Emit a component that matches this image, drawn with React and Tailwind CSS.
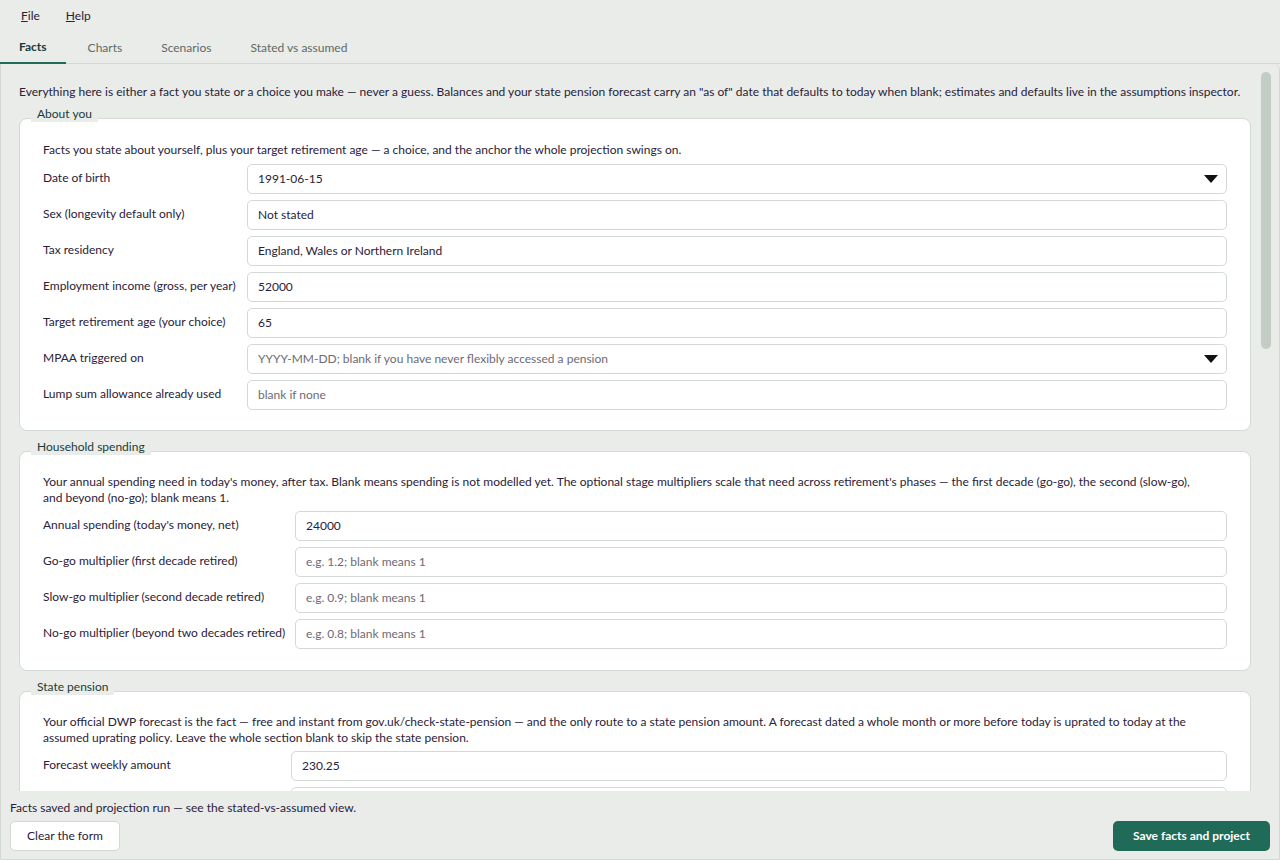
import React from "react";

const font = { fontFamily: 'Lato, "Noto Sans", Arial, sans-serif' };

const Caret = () => (
  <svg width="14" height="8" viewBox="0 0 14 8" className="shrink-0">
    <path d="M0 0h14L7 8z" fill="#111" />
  </svg>
);

const Field = ({ value, placeholder, combo }) => (
  <div className="h-[30px] flex items-center rounded-[5px] border border-[#d3d9d4] bg-white pl-[10px] pr-[8px]">
    <span className={value ? "flex-1 text-[#2a2139]" : "flex-1 text-[#6e6a74]"}>
      {value || placeholder}
    </span>
    {combo && <Caret />}
  </div>
);

const Section = ({ title, desc, rows, labelWidth, descClass, boxClass }) => (
  <div className="flex flex-col">
    <div className="relative z-10 ml-[12px] -mb-[4px] w-fit bg-[#e9ece9] px-[6px] leading-[16px] text-[#1d3b36]">
      {title}
    </div>
    <div className={"rounded-[8px] border border-[#d3d9d4] bg-white px-[23px] " + boxClass}>
      <p className={descClass}>{desc}</p>
      <div className="flex flex-col gap-[6px]">
        {rows.map((r, i) => (
          <div key={i} className="flex items-center">
            <div className="shrink-0 whitespace-nowrap" style={{ width: labelWidth }}>
              <span className="relative -top-[1px]">{r.label}</span>
            </div>
            <div className="flex-1">
              <Field value={r.value} placeholder={r.placeholder} combo={r.combo} />
            </div>
          </div>
        ))}
      </div>
    </div>
  </div>
);

const aboutRows = [
  { label: "Date of birth", value: "1991-06-15", combo: true },
  { label: "Sex (longevity default only)", value: "Not stated" },
  { label: "Tax residency", value: "England, Wales or Northern Ireland" },
  { label: "Employment income (gross, per year)", value: "52000" },
  { label: "Target retirement age (your choice)", value: "65" },
  {
    label: "MPAA triggered on",
    placeholder: "YYYY-MM-DD; blank if you have never flexibly accessed a pension",
    combo: true,
  },
  { label: "Lump sum allowance already used", placeholder: "blank if none" },
];

const spendRows = [
  { label: "Annual spending (today's money, net)", value: "24000" },
  { label: "Go-go multiplier (first decade retired)", placeholder: "e.g. 1.2; blank means 1" },
  { label: "Slow-go multiplier (second decade retired)", placeholder: "e.g. 0.9; blank means 1" },
  { label: "No-go multiplier (beyond two decades retired)", placeholder: "e.g. 0.8; blank means 1" },
];

const pensionRows = [
  { label: "Forecast weekly amount", value: "230.25" },
  { label: "", placeholder: "" },
];

export default function App() {
  return (
    <div style={font} className="h-[860px] w-[1280px] overflow-hidden bg-[#e9ece9] text-[12px] text-[#2a2139] flex flex-col">
      {/* menu */}
      <div className="flex h-[32px] items-center gap-[26px] pl-[21px]">
        <span><span className="underline">F</span>ile</span>
        <span><span className="underline">H</span>elp</span>
      </div>

      {/* tabs */}
      <div className="flex h-[32px] border-b border-[#d3d9d4] text-[#5f6a66]">
        <div className="flex items-center border-b-2 border-[#1f6b58] px-[19px] font-bold text-[#1d3b36] -mb-[1px]">
          Facts
        </div>
        <div className="flex items-center pl-[22px] pr-[20px]">Charts</div>
        <div className="flex items-center pl-[19px] pr-[20px]">Scenarios</div>
        <div className="flex items-center px-[19px]">Stated vs assumed</div>
      </div>

      {/* tab pane */}
      <div className="flex-1 flex flex-col min-h-0 rounded-b-[2px] rounded-tr-[6px] border border-t-0 border-[#d3d9d4]">
        <div className="relative h-[727px] shrink-0 overflow-hidden">
          <div className="pl-[18px] pr-[28px] pt-[19px]">
            <p className="leading-[17px] mb-[6px] whitespace-nowrap">
              Everything here is either a fact you state or a choice you make — never a guess. Balances and your state pension forecast carry an "as of" date that defaults to today when blank; estimates and defaults live in the assumptions inspector.
            </p>
            <div className="flex flex-col gap-[8px]">
              <Section
                title="About you"
                desc="Facts you state about yourself, plus your target retirement age — a choice, and the anchor the whole projection swings on."
                rows={aboutRows}
                labelWidth={204}
                descClass="leading-[16px] mb-[6px]"
                boxClass="pt-[23px] pb-[20px]"
              />
              <Section
                title="Household spending"
                desc="Your annual spending need in today's money, after tax. Blank means spending is not modelled yet. The optional stage multipliers scale that need across retirement's phases — the first decade (go-go), the second (slow-go), and beyond (no-go); blank means 1."
                rows={spendRows}
                labelWidth={252}
                descClass="leading-[16px] mb-[5px] pr-[24px]"
                boxClass="pt-[22px] pb-[21px]"
              />
              <Section
                title="State pension"
                desc="Your official DWP forecast is the fact — free and instant from gov.uk/check-state-pension — and the only route to a state pension amount. A forecast dated a whole month or more before today is uprated to today at the assumed uprating policy. Leave the whole section blank to skip the state pension."
                rows={pensionRows}
                labelWidth={248}
                descClass="leading-[16px] mb-[5px] pr-[10px]"
                boxClass="pt-[22px] pb-[21px]"
              />
            </div>
          </div>
          {/* scrollbar */}
          <div className="absolute right-[8px] top-[8px] h-[277px] w-[10px] rounded-full bg-[#c4ccc6]" />
        </div>

        <div className="pl-[9px] pt-[8px] leading-[17px]">
          Facts saved and projection run — see the stated-vs-assumed view.
        </div>
        <div className="flex items-center justify-between pl-[9px] pr-[9px] pt-[5px]">
          <button className="h-[30px] w-[110px] rounded-[5px] border border-[#d3d9d4] bg-white text-[#2a2139]">
            Clear the form
          </button>
          <button className="h-[30px] w-[157px] rounded-[5px] bg-[#1f6b58] font-bold text-white">
            Save facts and project
          </button>
        </div>
      </div>
    </div>
  );
}
